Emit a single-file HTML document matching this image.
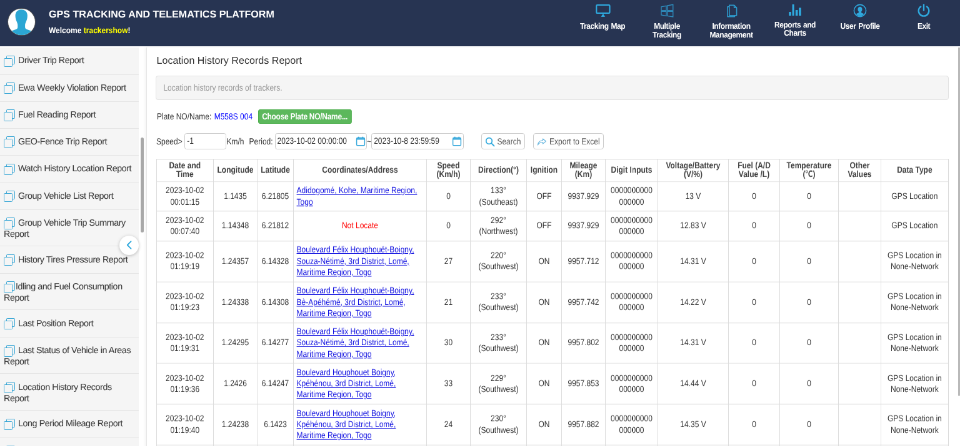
<!DOCTYPE html>
<html lang="en">
<head>
<meta charset="utf-8">
<title>GPS TRACKING AND TELEMATICS PLATFORM</title>
<style>
html,body{margin:0;padding:0;background:#fff;overflow:hidden;width:960px;height:446px}
*{box-sizing:border-box}
#root{position:absolute;left:0;top:0;width:1536px;height:714px;transform:scale(.625);transform-origin:0 0;overflow:hidden;background:transparent;will-change:transform;font-family:"Liberation Sans","Noto Sans CJK SC","DejaVu Sans",sans-serif;font-size:12px;color:#333;text-rendering:geometricPrecision;-webkit-font-smoothing:antialiased}
/* header */
.hdr{position:absolute;left:0;top:0;width:1536px;height:74.4px;background:#273452;color:#fff}
.avatar{position:absolute;left:13.2px;top:14px;width:42.4px;height:42.4px;border-radius:50%;background:#fff;overflow:hidden;box-shadow:0 0 0 .9px #555}
.ttl{position:absolute;left:78px;top:12.6px;font-size:16.1px;font-weight:bold;line-height:20px;white-space:nowrap}
.wel{position:absolute;left:78px;top:41.2px;font-size:12px;font-weight:bold;line-height:16px;white-space:nowrap;transform:scaleY(1.13);transform-origin:0 60%}
.wel b{color:#ffff00}
.nav{position:absolute;top:0;width:104px;height:74px;text-align:center;font-weight:bold;font-size:13px;line-height:13.5px;letter-spacing:-.5px;word-spacing:1px}
.nav svg{position:absolute;left:50%;top:5px;margin-left:-12px;width:24px;height:24px}
.nav span{position:absolute;left:-10px;right:-10px;top:35.2px;transform:scaleX(.925)}
.nav.up svg{top:3px}.nav.up span{top:32.6px}
/* sidebar */
.side{position:absolute;left:0;top:76.3px;width:222px;height:640px;background:#f5f5f5;overflow:hidden}
.side ul{list-style:none;margin:0;padding:0}
.side li{padding:10.15px 4px 10.1px 6px;border-bottom:1px solid #e6e6e6;font-size:14.3px;line-height:15.5px;color:#3c3c3c;letter-spacing:-.42px;-webkit-text-stroke:.08px #3c3c3c}
.side li i{display:inline-block;width:18px;height:22px;vertical-align:middle;margin-right:5px;position:relative}
.side li i:before{content:"";position:absolute;left:3.7px;top:2.25px;width:12.5px;height:12.5px;border:1.9px solid #36a5d5;border-radius:1.5px}
.side li i:after{content:"";position:absolute;left:-.3px;top:6.25px;width:12.5px;height:12.5px;border:1.9px solid #36a5d5;border-radius:1.5px;background:#f5f5f5}
.sb{position:absolute;left:224.5px;top:220px;width:5px;height:152px;background:#a8a8a8;border-radius:3px}
.col{position:absolute;left:191px;top:377px;width:31px;height:31px;border-radius:50%;background:#fff;box-shadow:0 1px 5px rgba(0,0,0,.25)}
.col svg{position:absolute;left:8px;top:7px;width:16px;height:16px}
/* main */
.main{position:absolute;left:234px;top:76px;width:1300px;height:640px;background:#fff;border-left:1px solid #e6e6e6;box-shadow:-2px 0 4px rgba(0,0,0,.05)}
.h1{position:absolute;left:15.5px;top:8.8px;font-size:16.1px;line-height:24px;color:#333;white-space:nowrap}
.well{position:absolute;left:14.4px;top:44.5px;width:1268.5px;height:39px;background:#f5f5f5;border:1px solid #e3e3e3;border-radius:4px;padding:10px 11px;color:#999;font-size:12px;line-height:17px}
.r1{position:absolute;left:16px;top:99px;height:22px;line-height:22px;white-space:nowrap}
.r1 a{color:#0000ff;margin-left:1px}
.btn-g{position:absolute;left:177.6px;top:99px;width:150px;height:23px;background:#5cb85c;border:1px solid #4cae4c;border-radius:3px;color:#fff;font-weight:bold;font-size:12px;line-height:21px;text-align:center;letter-spacing:-.28px}
.r2{position:absolute;left:16px;top:138px;height:24px;line-height:24px;white-space:nowrap}
.inp{position:absolute;top:137.4px;height:25.4px;border:1px solid #ccc;border-radius:3.5px;background:#fff;padding:0 3px;line-height:23px;font-size:12px;color:#333;white-space:nowrap}
.lbl{position:absolute;top:138px;line-height:24px;white-space:nowrap}
.inp svg{position:absolute;right:2.6px;top:3.4px;width:16px;height:16px}
.btn{position:absolute;top:137.3px;height:26px;border:1px solid #ccc;border-radius:4px;background:#fff;color:#555;line-height:24px;font-size:12px;white-space:nowrap}
.btn svg{position:absolute;left:4.4px;top:4.4px;width:16px;height:16px}
table{position:absolute;left:14.6px;top:177.9px;width:1266.7px;transform:scaleY(1.17);transform-origin:0 0;border-collapse:collapse;table-layout:fixed;font-size:12px;color:#333;text-rendering:geometricPrecision;-webkit-font-smoothing:antialiased}
th,td{border:1px solid #ddd;text-align:center;vertical-align:middle;padding:4.55px 4px;line-height:15.25px;font-weight:normal;overflow:hidden}
th{font-weight:bold;line-height:12.31px;padding:1.7px 3px 3.4px;height:30.4px;color:#404040}
td.a{text-align:left;padding-left:4.6px;padding-right:1px}
td.a a{color:#1010e0;text-decoration:underline}
td.r{color:#ff0000}
.sy{display:inline-block;transform:scaleY(1.17);transform-origin:50% 52%}
.vs{position:absolute;left:1532.7px;top:76px;width:4px;height:557px;background:#b9b9b9}
</style>
</head>
<body>
<div id="root">
  <div class="hdr">
    <div class="avatar">
      <svg viewBox="0 0 42.4 42.4" width="42.4" height="42.4"><path d="M21.2 1.200C15 1.200 11.500 5.500 11.500 11c0 4 1 7 2 9 1 2.500 1.800 4 1.800 6v3.500c0 2-1.300 3-4.300 4-3 1-6 2-8 3.500V44h36.400v-7c-2-1.500-5-2.500-8-3.500-3-1-4.300-2-4.300-4V26c0-2 .8-3.500 1.800-6 1-2 2-5 2-9 0-5.500-3.500-9.800-9.700-9.800z" fill="#2ba6d4"/></svg>
    </div>
    <div class="ttl">GPS TRACKING AND TELEMATICS PLATFORM</div>
    <div class="wel">Welcome <b>trackershow</b>!</div>

    <div class="nav" style="left:912px">
      <svg viewBox="0 0 24 24" fill="none" stroke="#2fa9de" stroke-width="2.200" style="overflow:visible"><rect x="2.300" y="3" width="21.200" height="13" rx="1.300"/><path d="M10.200 21.400h5.400l-2.700-3.800z" fill="#2fa9de" stroke-width="1"/></svg>
      <span>Tracking Map</span></div>
    <div class="nav" style="left:1015px">
      <svg viewBox="0 0 24 24" fill="none" stroke="#2f8fc0" stroke-width="1.300"><path d="M3 5.800l8-1.500v7.300H3zM12.800 4L21.800 2.300V11.600h-9zM3 13.300h8v7.200l-8-1.500zM12.800 13.300h9v8.700l-9-1.600z"/></svg>
      <span>Multiple<br>Tracking</span></div>
    <div class="nav" style="left:1118px">
      <svg viewBox="0 0 24 24" fill="none" stroke="#2e9bcd" stroke-width="1.600" stroke-linejoin="round" style="overflow:visible"><path d="M8.800 3.200h7.800l4 4v12.600H8.800z"/><path d="M8.800 5.800H6v16h11.400v-2"/><path d="M16.600 3.200V7.200h4"/></svg>
      <span>Information<br>Management</span></div>
    <div class="nav up" style="left:1220px">
      <svg viewBox="0 0 24 24" fill="#2fa9de"><rect x="2.200" y="16" width="3.700" height="6"/><rect x="7.500" y="4" width="3.700" height="18"/><rect x="12.800" y="13" width="3.700" height="9"/><rect x="18.100" y="9.400" width="3.700" height="12.600"/></svg>
      <span>Reports and<br>Charts</span></div>
    <div class="nav" style="left:1324px">
      <svg viewBox="0 0 24 24"><circle cx="12" cy="12" r="9.600" fill="none" stroke="#2fa9de" stroke-width="1.600"/><path d="M12 5.800c-2.200 0-3.500 1.700-3.500 4 0 1.700 0.600 3.100 1.500 4 0.100 1-0.200 1.600-1.100 2-1.200 0.600-2.400 1-3.300 1.700 1.500 2 3.800 3.200 6.400 3.200s4.900-1.200 6.400-3.200c-0.900-0.700-2.100-1.100-3.300-1.700-0.900-0.400-1.200-1-1.100-2 0.900-0.900 1.500-2.300 1.500-4 0-2.300-1.300-4-3.500-4z" fill="#2fa9de"/></svg>
      <span>User Profile</span></div>
    <div class="nav" style="left:1426px">
      <svg viewBox="0 0 24 24" fill="none" stroke="#2fa9de" stroke-width="2.400" stroke-linecap="round"><path d="M12 2.500v9"/><path d="M7.200 5.600a8.300 8.300 0 1 0 9.600 0"/></svg>
      <span>Exit</span></div>
  </div>

  <div class="side">
    <ul>
      <li><i></i>Driver Trip Report</li>
      <li><i></i>Ewa Weekly Violation Report</li>
      <li><i></i>Fuel Reading Report</li>
      <li><i></i>GEO-Fence Trip Report</li>
      <li><i></i>Watch History Location Report</li>
      <li><i></i>Group Vehicle List Report</li>
      <li><i></i>Group Vehicle Trip Summary Report</li>
      <li><i></i>History Tires Pressure Report</li>
      <li><i style="margin-right:1px"></i>Idling and Fuel Consumption Report</li>
      <li><i></i>Last Position Report</li>
      <li><i></i>Last Status of Vehicle in Areas Report</li>
      <li><i></i>Location History Records Report</li>
      <li><i></i>Long Period Mileage Report</li>
      <li><i></i>Mileage Report</li>
    </ul>
  </div>
  <div class="sb"></div>
  <div class="col"><svg viewBox="0 0 16 16" fill="none" stroke="#2fa9de" stroke-width="2" stroke-linecap="round" stroke-linejoin="round"><path d="M10.600 2.200L4.800 8l5.800 5.800" stroke-width="1.800"/></svg></div>

  <div class="main">
    <div class="h1">Location History Records Report</div>
    <div class="well"><span class="sy">Location history records of trackers.</span></div>
    <div class="r1 sy" style="display:block;transform-origin:0 52%">Plate NO/Name: <a>M558S 004</a></div>
    <div class="btn-g"><span class="sy">Choose Plate NO/Name...</span></div>

    <div class="lbl sy" style="display:block;left:15px">Speed&gt;</div>
    <div class="inp" style="left:60.2px;width:66.5px"><span class="sy">-1</span></div>
    <div class="lbl sy" style="display:block;left:127.5px">Km/h</div>
    <div class="lbl sy" style="display:block;left:163.6px">Period:</div>
    <div class="inp" style="left:204.6px;width:147.2px"><span class="sy">2023-10-02 00:00:00</span><svg style="right:.8px" viewBox="0 0 16 16" fill="none" stroke="#35a8dc" stroke-width="1.500"><rect x="1.600" y="2.600" width="12.800" height="12.200" rx="1.600"/><path d="M1.600 4.300h12.800" stroke-width="2.400"/><path d="M4.700 .7v2.400M11.300 .7v2.400" stroke-width="1.700"/></svg></div>
    <div class="lbl sy" style="display:block;left:352px">~</div>
    <div class="inp" style="left:359.200px;width:148px"><span class="sy">2023-10-8 23:59:59</span><svg viewBox="0 0 16 16" fill="none" stroke="#35a8dc" stroke-width="1.500"><rect x="1.600" y="2.600" width="12.800" height="12.200" rx="1.600"/><path d="M1.600 4.300h12.800" stroke-width="2.400"/><path d="M4.700 .7v2.400M11.300 .7v2.400" stroke-width="1.700"/></svg></div>
    <div class="btn" style="left:535.4px;width:69.6px;padding-left:24px"><svg viewBox="0 0 16 16" fill="none" stroke="#2fa9de" stroke-width="1.800" stroke-linecap="round"><circle cx="6.500" cy="6.500" r="4.800"/><path d="M10.200 10.200L14.500 14.500"/></svg><span class="sy">Search</span></div>
    <div class="btn" style="left:618.4px;width:113px;padding-left:24.600px"><svg viewBox="0 0 16 16" fill="none" stroke="#6db9e0" stroke-width="1.200" stroke-linejoin="round"><path d="M9.500 3l5 4-5 4V8.800C5.500 8.500 3 10 1.500 13 2 8.500 5 5.800 9.500 5.500z"/></svg><span class="sy">Export to Excel</span></div>

    <table>
      <colgroup><col style="width:91.4px"><col style="width:70px"><col style="width:58px"><col style="width:213px"><col style="width:70px"><col style="width:90px"><col style="width:56px"><col style="width:70px"><col style="width:84px"><col style="width:113px"><col style="width:82px"><col style="width:94px"><col style="width:68px"><col style="width:107.8px"></colgroup>
      <tr><th>Date and<br>Time</th><th>Longitude</th><th>Latitude</th><th>Coordinates/Address</th><th>Speed<br>(Km/h)</th><th>Direction(°)</th><th>Ignition</th><th>Mileage<br>(Km)</th><th>Digit Inputs</th><th>Voltage/Battery<br>(V/%)</th><th>Fuel (A/D<br>Value /L)</th><th>Temperature<br>(℃)</th><th>Other<br>Values</th><th>Data Type</th></tr>
      <tr><td>2023-10-02<br>00:01:15</td><td>1.1435</td><td>6.21805</td><td class="a"><a>Adidogomé, Kohe, Maritime Region, Togo</a></td><td>0</td><td>133°<br>(Southeast)</td><td>OFF</td><td>9937.929</td><td>0000000000<br>000000</td><td>13 V</td><td>0</td><td>0</td><td></td><td>GPS Location</td></tr>
      <tr><td>2023-10-02<br>00:07:40</td><td>1.14348</td><td>6.21812</td><td class="r">Not Locate</td><td>0</td><td>292°<br>(Northwest)</td><td>OFF</td><td>9937.929</td><td>0000000000<br>000000</td><td>12.83 V</td><td>0</td><td>0</td><td></td><td>GPS Location</td></tr>
      <tr><td>2023-10-02<br>01:19:19</td><td>1.24357</td><td>6.14328</td><td class="a"><a>Boulevard Félix Houphouët-Boigny, Souza-Nétimé, 3rd District, Lomé, Maritime Region, Togo</a></td><td>27</td><td>220°<br>(Southwest)</td><td>ON</td><td>9957.712</td><td>0000000000<br>000000</td><td>14.31 V</td><td>0</td><td>0</td><td></td><td>GPS Location in<br>None-Network</td></tr>
      <tr><td>2023-10-02<br>01:19:23</td><td>1.24338</td><td>6.14308</td><td class="a"><a>Boulevard Félix Houphouët-Boigny, Bè-Apéhémé, 3rd District, Lomé, Maritime Region, Togo</a></td><td>21</td><td>233°<br>(Southwest)</td><td>ON</td><td>9957.742</td><td>0000000000<br>000000</td><td>14.22 V</td><td>0</td><td>0</td><td></td><td>GPS Location in<br>None-Network</td></tr>
      <tr><td>2023-10-02<br>01:19:31</td><td>1.24295</td><td>6.14277</td><td class="a"><a>Boulevard Félix Houphouët-Boigny, Souza-Nétimé, 3rd District, Lomé, Maritime Region, Togo</a></td><td>30</td><td>233°<br>(Southwest)</td><td>ON</td><td>9957.802</td><td>0000000000<br>000000</td><td>14.31 V</td><td>0</td><td>0</td><td></td><td>GPS Location in<br>None-Network</td></tr>
      <tr><td>2023-10-02<br>01:19:36</td><td>1.2426</td><td>6.14247</td><td class="a"><a>Boulevard Houphouet Boigny, Kpéhénou, 3rd District, Lomé, Maritime Region, Togo</a></td><td>33</td><td>229°<br>(Southwest)</td><td>ON</td><td>9957.853</td><td>0000000000<br>000000</td><td>14.44 V</td><td>0</td><td>0</td><td></td><td>GPS Location in<br>None-Network</td></tr>
      <tr><td>2023-10-02<br>01:19:40</td><td>1.24238</td><td>6.1423</td><td class="a"><a>Boulevard Houphouet Boigny, Kpéhénou, 3rd District, Lomé, Maritime Region, Togo</a></td><td>24</td><td>230°<br>(Southwest)</td><td>ON</td><td>9957.882</td><td>0000000000<br>000000</td><td>14.35 V</td><td>0</td><td>0</td><td></td><td>GPS Location in<br>None-Network</td></tr>
      <tr><td>2023-10-02<br>01:19:44</td><td>1.24214</td><td>6.14215</td><td class="a"><a>Boulevard Houphouet Boigny, Kpéhénou, 3rd District, Lomé, Maritime Region, Togo</a></td><td>26</td><td>231°<br>(Southwest)</td><td>ON</td><td>9957.912</td><td>0000000000<br>000000</td><td>14.38 V</td><td>0</td><td>0</td><td></td><td>GPS Location in<br>None-Network</td></tr>
    </table>
  </div>
  <div class="vs"></div>
</div>
</body>
</html>
